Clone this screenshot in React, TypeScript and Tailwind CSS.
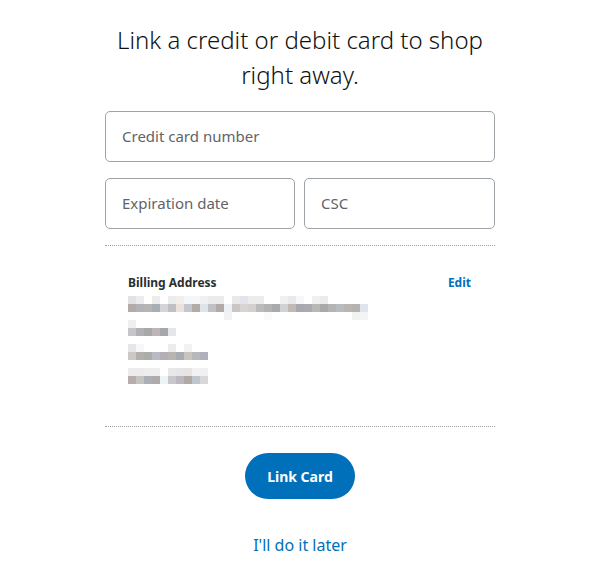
import React from 'react';

const W = '#ffffff';

// pixelated (blurred) address lines: each line is rows of 8px blocks
const mosaic: string[][][] = [
  [
    ['#e2e2e4', '#ececee', W, '#ececec', W, '#ececec', '#f3eeee', '#f5f6fa', '#f5f6fa', '#f0f0f0', '#ebebeb', '#ebebeb', W, '#ebe9e7', '#e3e4ea', '#ececec', '#ececec', W, W, '#f0f0f0', '#e9e9e9', '#f6f6fb', W, '#f0f0f0', '#ebebeb', W, W, W, W, W],
    ['#b3aba9', '#b2b2b8', '#b5b5b5', '#a8aeb3', '#d5d5d9', '#c0c0c2', '#ebe1dd', '#c4c7d0', '#b3aba8', '#dfe3ea', '#c1c1c5', '#b0aaa8', '#edf1f7', '#cac6c3', '#d7d5d4', '#d4d0cf', '#bdbbba', '#b3b3b3', '#a8abad', '#d2d2d2', '#c1b9b6', '#a8a8b0', '#aaaab0', '#b8b8b6', '#a9aaa8', '#b4b4b4', '#b8bcbe', '#b8b5b2', '#b5b3b0', '#e0e4ec'],
    [W, W, W, W, W, W, W, W, W, W, W, W, '#f2f2f2', W, W, W, W, '#fafafa', W, W, W, W, W, W, W, W, W, W, '#f2f2f2', '#f4f4f4'],
  ],
  [
    ['#eef0f0', W, W, W, W, W],
    ['#c6c5cb', '#b1b0b4', '#a8a8a8', '#bcb6b6', '#a7a6ac', '#e3e7ea'],
  ],
  [
    ['#e6e6e6', '#f6f7fb', W, W, W, '#ececec', W, '#f2f2f2', W, W],
    ['#cbc9c8', '#b4aeac', '#acaca8', '#b8bbc4', '#b2b0b5', '#b9b3b1', '#a9abb2', '#c6c5bf', '#b5b9bc', '#b1b0ba'],
  ],
  [
    ['#ececec', '#ececec', '#eeeeee', '#eeeeee', W, '#e8e8ea', '#e6e6e8', '#e8e4e4', '#f2f2f4', '#f0f0f0'],
    ['#b6adac', '#c5c4bf', '#aab0b4', '#b1aaad', '#eef3f5', '#c8c7cb', '#bbb8c0', '#b1a8a8', '#c1c6ce', '#d8d8d8'],
  ],
];

const Field: React.FC<{ label: string; className?: string }> = ({ label, className }) => (
  <div className={`h-[51px] flex items-center px-4 border border-[#9da3a6] rounded-[5px] bg-white ${className || ''}`}>
    <span className="text-[15px] text-[#5f6468]">{label}</span>
  </div>
);

export default function App() {
  return (
    <div className="w-[600px] h-[585px] bg-white flex flex-col items-center" style={{ fontFamily: '"Noto Sans", "Open Sans", sans-serif' }}>
      <h1 className="pt-[22px] w-[420px] text-center text-[24px] leading-[35px] font-light text-[#111111]">
        Link a credit or debit card to shop right away.
      </h1>

      <div className="w-[390px] mt-[19px] flex flex-col">
        <Field label="Credit card number" />
        <div className="mt-[16px] flex gap-[9px]">
          <Field label="Expiration date" className="w-[190px]" />
          <Field label="CSC" className="flex-1" />
        </div>

        <div className="mt-[16px] border-t border-dotted border-[#9da3a6]" />

        <div className="h-[180px] pl-[23px] pr-[24px] pt-[28px]">
          <div className="flex justify-between items-center">
            <span className="text-[12px] leading-[18px] font-bold text-[#2c2e2f]">Billing Address</span>
            <span className="text-[12px] leading-[18px] font-bold text-[#0070ba]">Edit</span>
          </div>
          <div className="mt-[4px] flex flex-col">
            {mosaic.map((rows, i) => (
              <div key={i} className={`flex flex-col ${i > 1 ? 'mt-[8px]' : ''}`}>
                {rows.map((row, j) => (
                  <div key={j} className="flex">
                    {row.map((c, k) => (
                      <div key={k} className="w-[8px] h-[8px]" style={{ backgroundColor: c }} />
                    ))}
                  </div>
                ))}
              </div>
            ))}
          </div>
        </div>

        <div className="border-t border-dotted border-[#9da3a6]" />

        <div className="flex flex-col items-center">
          <button className="mt-[26px] w-[110px] h-[46px] rounded-full bg-[#0070ba] text-white text-[14px] font-bold">
            Link Card
          </button>
          <a className="mt-[34px] text-[16px] text-[#0070ba]">I'll do it later</a>
        </div>
      </div>
    </div>
  );
}
